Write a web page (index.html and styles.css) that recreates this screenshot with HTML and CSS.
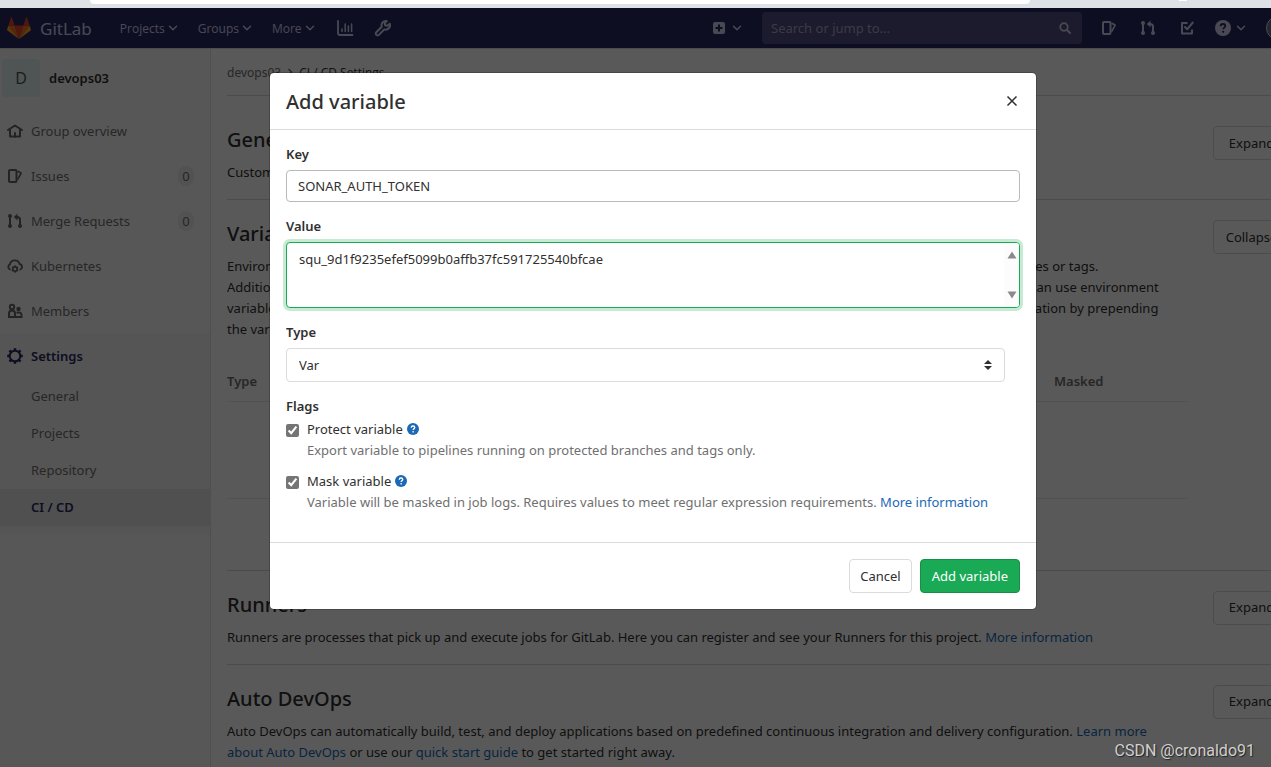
FILE: index.html
```html
<!DOCTYPE html>
<html lang="en">
<head>
<meta charset="utf-8">
<title>CI / CD Settings · devops03 · GitLab</title>
<link rel="stylesheet" href="styles.css">
</head>
<body>
<svg class="sprite" aria-hidden="true">
  <symbol id="i-caret" viewBox="0 0 12 12"><path d="M2.500 4.200 6 7.700l3.500-3.500" fill="none" stroke="currentColor" stroke-width="1.500" stroke-linecap="round" stroke-linejoin="round"/></symbol>
  <symbol id="i-issues" viewBox="0 0 16 16"><path d="M3 2h5.500a1 1 0 0 1 1 1v10a1 1 0 0 1-1 1H3a1 1 0 0 1-1-1V3a1 1 0 0 1 1-1z" fill="none" stroke="currentColor" stroke-width="2"/><path d="M10.500 3.300l3 1.300c.5.200.6.600.4 1l-3.400 6" fill="none" stroke="currentColor" stroke-width="1.700" stroke-linejoin="round"/></symbol>
  <symbol id="i-merge" viewBox="0 0 16 16"><path d="M3 3v10M13 13V6.500C13 4.700 12 4 10 4H9" fill="none" stroke="currentColor" stroke-width="2"/><circle cx="3" cy="3" r="2" fill="currentColor"/><circle cx="3" cy="13" r="2" fill="currentColor"/><circle cx="13" cy="13" r="2" fill="currentColor"/><path d="M10.500.5v7L6.800 4z" fill="currentColor"/></symbol>
  <symbol id="i-todo" viewBox="0 0 16 16"><path d="M8.500 3H3v10.500h10V9.500" fill="none" stroke="currentColor" stroke-width="2" stroke-linejoin="round"/><path d="M6 7l2.200 2.300L13.800 2.500" fill="none" stroke="currentColor" stroke-width="2" stroke-linecap="round" stroke-linejoin="round"/></symbol>
  <symbol id="i-help" viewBox="0 0 16 16"><circle cx="8" cy="8" r="8" fill="currentColor"/><path class="mark" d="M5.700 6.300C5.700 4.800 6.700 4 8 4s2.300.8 2.300 2c0 1.600-2.100 1.700-2.100 3.300" fill="none" stroke-width="1.800"/><circle class="mark-dot" cx="8.200" cy="11.800" r="1.100"/></symbol>
</svg>
<div class="viewport">
  <div class="browser"><div class="omnibox"></div><div class="tab-dot"></div></div>
  <div class="app">
    <header class="navbar">
      <a class="brand" href="#">
        <svg class="tanuki" viewBox="0 0 24 22"><path fill="#e24329" d="M12 22 7.600 8.400h8.800z"/><path fill="#fc6d26" d="M12 22 7.600 8.400H1.400zM12 22l4.400-13.600h6.200z"/><path fill="#fca326" d="M1.400 8.400.1 12.500c-.1.400 0 .8.300 1L12 22zM22.600 8.400l1.300 4.100c.1.400 0 .8-.3 1L12 22z"/><path fill="#e24329" d="M1.400 8.400h6.200L4.900.3c-.1-.4-.7-.4-.8 0zM22.600 8.400h-6.200L19.100.3c.1-.4.700-.4.800 0z"/></svg>
        <span>GitLab</span>
      </a>
      <nav class="menu">
        <button type="button">Projects <svg class="caret"><use href="#i-caret"/></svg></button>
        <button type="button">Groups <svg class="caret"><use href="#i-caret"/></svg></button>
        <button type="button">More <svg class="caret"><use href="#i-caret"/></svg></button>
      </nav>
      <div class="tools">
        <a href="#" aria-label="Analytics"><svg class="tool" viewBox="0 0 18 18"><path d="M2 2v12a2 2 0 0 0 2 2h12.500" fill="none" stroke="currentColor" stroke-width="1.800" stroke-linecap="round"/><path d="M6 12.500V10M9.200 12.500V5M12.400 12.500V7M15.600 12.500V5" fill="none" stroke="currentColor" stroke-width="1.500" stroke-linecap="round"/></svg></a>
        <a href="#" aria-label="Admin"><svg class="tool" viewBox="0 0 18 18"><path d="M15.800 4.800l-2.700 2-2-.5-.5-2L12.700 2A4.400 4.400 0 0 0 7.700 7.800L2.300 13.300a1.800 1.800 0 0 0 2.600 2.600l5.400-5.500a4.400 4.400 0 0 0 5.500-5.600z" fill="none" stroke="currentColor" stroke-width="2" stroke-linejoin="round"/></svg></a>
      </div>
      <div class="nav-right">
        <button class="drop" type="button" aria-label="New"><svg class="icon" viewBox="0 0 16 16"><path fill="currentColor" fill-rule="evenodd" d="M4 2h8a2 2 0 0 1 2 2v8a2 2 0 0 1-2 2H4a2 2 0 0 1-2-2V4a2 2 0 0 1 2-2zm3 2.500V7H4.500v2H7v2.500h2V9h2.500V7H9V4.500z"/></svg><svg class="caret"><use href="#i-caret"/></svg></button>
        <label class="search"><input type="text" placeholder="Search or jump to..." aria-label="Search or jump to"><svg class="lens" viewBox="0 0 12 12"><circle cx="5" cy="5" r="3.800" fill="none" stroke="currentColor" stroke-width="1.700"/><path d="M8 8l3 3" stroke="currentColor" stroke-width="2" stroke-linecap="round"/></svg></label>
        <div class="nav-icons">
          <a href="#" aria-label="Issues"><svg class="icon"><use href="#i-issues"/></svg></a>
          <a href="#" aria-label="Merge requests"><svg class="icon"><use href="#i-merge"/></svg></a>
          <a href="#" aria-label="To-Do List"><svg class="icon"><use href="#i-todo"/></svg></a>
        </div>
        <button class="drop" type="button" aria-label="Help"><svg class="icon nav-help"><use href="#i-help"/></svg><svg class="caret"><use href="#i-caret"/></svg></button>
        <span class="user"></span>
      </div>
    </header>
    <div class="body">
      <aside class="sidebar">
        <a class="context" href="#"><span class="avatar">D</span><strong>devops03</strong></a>
        <a class="item" href="#"><svg class="icon" viewBox="0 0 16 16"><path d="M1 7l7-4.500L15 7M3 6.500v7h3.500M13 6.500v7H9.500M8 10v4" fill="none" stroke="currentColor" stroke-width="2" stroke-linejoin="round" stroke-linecap="round"/></svg>Group overview</a>
        <a class="item" href="#"><svg class="icon"><use href="#i-issues"/></svg>Issues<span class="count">0</span></a>
        <a class="item" href="#"><svg class="icon"><use href="#i-merge"/></svg>Merge Requests<span class="count">0</span></a>
        <a class="item" href="#"><svg class="icon" viewBox="0 0 16 16"><path d="M3 11.500A2.800 2.800 0 0 1 2.900 6.400 5 5 0 0 1 12.600 6a2.900 2.900 0 0 1 .7 5.500" fill="none" stroke="currentColor" stroke-width="1.900" stroke-linecap="round"/><circle cx="8" cy="11" r="2.200" fill="none" stroke="currentColor" stroke-width="1.700"/><path d="M8 7.200v1.400M8 13.400v1.400M4.900 9.200l1.200.7M9.900 12.100l1.200.7M11.100 9.200l-1.200.7M6.100 12.100l-1.200.7" stroke="currentColor" stroke-width="1.500"/></svg>Kubernetes</a>
        <a class="item" href="#"><svg class="icon" viewBox="0 0 16 16"><circle cx="5" cy="4" r="2.200" fill="none" stroke="currentColor" stroke-width="2"/><path d="M2 14V10.500C2 8.500 3.200 7.500 5 7.500s3 1 3 3V14z" fill="none" stroke="currentColor" stroke-width="2"/><circle cx="11.500" cy="6" r="2.200" fill="currentColor"/><path d="M9.500 9.800c3-1 5 0 5 2V14H8" fill="none" stroke="currentColor" stroke-width="2"/></svg>Members</a>
        <div class="group">
          <a class="item current" href="#"><svg class="icon" viewBox="0 0 16 16"><circle cx="8" cy="8" r="5.300" fill="none" stroke="currentColor" stroke-width="2"/><path d="M8 .2v2.500M8 13.300v2.500M.2 8h2.500M13.300 8h2.500M2.500 2.500l1.700 1.700M11.800 11.800l1.700 1.700M13.500 2.500l-1.700 1.700M4.200 11.800l-1.700 1.700" stroke="currentColor" stroke-width="2.600"/></svg>Settings</a>
          <a class="sub" href="#">General</a>
          <a class="sub" href="#">Projects</a>
          <a class="sub" href="#">Repository</a>
          <a class="sub active" href="#">CI / CD</a>
        </div>
      </aside>
      <main class="content">
        <nav class="crumbs"><a href="#">devops03</a><svg class="crumb-arrow" viewBox="0 0 8 8"><path d="M2.500 1l3 3-3 3" fill="none" stroke="currentColor" stroke-width="1.500"/></svg><strong>CI / CD Settings</strong></nav>
        <section class="panel">
          <div class="panel-text"><h4>General pipelines</h4><p>Customize your pipeline configuration.</p></div>
          <button class="btn toggle" type="button">Expand</button>
        </section>
        <section class="panel variables">
          <div class="panel-text">
            <h4>Variables</h4>
            <p>Environment variables are applied to environments via the runner. They can be protected by only exposing them to protected branches or tags.<br>Additionally, they can be masked so they are hidden in job logs, though they must match certain regexp requirements to do so. You can use environment<br>variables for passwords, secret keys, or whatever you want. You may also add variables that are made available to the running application by prepending<br>the variable key with K8S_SECRET_.</p>
            <table>
              <thead><tr><th class="c-type">Type</th><th class="c-key">Key</th><th class="c-value">Value</th><th class="c-prot">Protected</th><th>Masked</th></tr></thead>
              <tbody><tr><td colspan="5"></td></tr></tbody>
            </table>
          </div>
          <button class="btn toggle" type="button">Collapse</button>
        </section>
        <section class="panel">
          <div class="panel-text"><h4>Runners</h4><p>Runners are processes that pick up and execute jobs for GitLab. Here you can register and see your Runners for this project. <a href="#">More information</a></p></div>
          <button class="btn toggle" type="button">Expand</button>
        </section>
        <section class="panel">
          <div class="panel-text"><h4>Auto DevOps</h4><p>Auto DevOps can automatically build, test, and deploy applications based on predefined continuous integration and delivery configuration. <a href="#">Learn more<br>about Auto DevOps</a> or use our <a href="#">quick start guide</a> to get started right away.</p></div>
          <button class="btn toggle" type="button">Expand</button>
        </section>
      </main>
    </div>
    <div class="backdrop">
      <form class="modal" role="dialog" aria-labelledby="modal-title">
        <header class="modal-head"><h2 id="modal-title">Add variable</h2><button class="close" type="button" aria-label="Close"><svg viewBox="0 0 12 12"><path d="M1.500 1.500l9 9M10.500 1.500l-9 9" stroke="currentColor" stroke-width="1.500"/></svg></button></header>
        <div class="modal-body">
          <div class="field"><label for="key">Key</label><input class="control" id="key" type="text" value="SONAR_AUTH_TOKEN"></div>
          <div class="field"><label for="value">Value</label>
            <div class="area"><textarea id="value" spellcheck="false">squ_9d1f9235efef5099b0affb37fc591725540bfcae</textarea>
              <div class="scroller"><svg viewBox="0 0 10 8"><path d="M5 .5 9.500 7.500h-9z" fill="#8a8a8a"/></svg><svg viewBox="0 0 10 8"><path d="M5 7.500 9.500.5h-9z" fill="#8a8a8a"/></svg></div></div>
          </div>
          <div class="field type"><label for="type">Type</label>
            <div class="pick"><select id="type"><option>Var</option><option>File</option></select><svg viewBox="0 0 8 10"><path d="M4 0l4 4H0zM4 10l4-4H0z" fill="#303030"/></svg></div></div>
          <fieldset>
            <legend>Flags</legend>
            <div class="flag"><input id="protect" type="checkbox" checked><div><label for="protect">Protect variable</label><a class="hint" href="#" aria-label="Help"><svg><use href="#i-help"/></svg></a><p>Export variable to pipelines running on protected branches and tags only.</p></div></div>
            <div class="flag"><input id="mask" type="checkbox" checked><div><label for="mask">Mask variable</label><a class="hint" href="#" aria-label="Help"><svg><use href="#i-help"/></svg></a><p>Variable will be masked in job logs. Requires values to meet regular expression requirements. <a href="#">More information</a></p></div></div>
          </fieldset>
        </div>
        <footer class="modal-foot"><button class="btn" type="button">Cancel</button><button class="btn success" type="submit">Add variable</button></footer>
      </form>
    </div>
  </div>
  <div class="watermark">CSDN @cronaldo91</div>
</div>
</body>
</html>
```
FILE: styles.css
```css
* { box-sizing: border-box; }
body { margin: 0; font: 13px/21px "Noto Sans", "Open Sans", sans-serif; color: #303030; }
button, input, select, textarea { font: inherit; color: inherit; }
button { cursor: pointer; }
a { color: #1b69b6; text-decoration: none; }
h2, h4, p { margin: 0; }
svg { display: block; flex: none; }
.sprite { position: absolute; width: 0; height: 0; }

.viewport { position: relative; height: 100vh; overflow: hidden; display: flex; flex-direction: column; }
.browser { position: relative; flex: none; height: 8px; background: #dee1e6; }
.omnibox { height: 4px; margin: 0 241px 0 90px; background: #fff; border-radius: 0 0 12px 12px; }
.tab-dot { position: absolute; top: 0; right: 84px; width: 8px; height: 1px; background: #fff; }
.app { position: relative; flex: 1; min-height: 0; margin-right: -35px; display: flex; flex-direction: column; overflow: hidden; background: #fff; }

/* Navigation bar */
.navbar { flex: none; height: 40px; display: flex; align-items: center; padding: 0 16px 0 7px; background: #292961; color: #d1d1f0; font-size: 12px; font-weight: 500; }
.navbar a { color: inherit; }
.navbar button { padding: 0; border: 0; background: none; }
.brand { display: flex; align-items: center; gap: 9px; font-size: 17px; font-weight: 400; }
.tanuki { width: 24px; height: 22px; }
.menu { display: flex; gap: 19px; margin-left: 28px; font-family: "Open Sans", sans-serif; }
.menu button, .drop { display: flex; align-items: center; gap: 2px; }
.caret { width: 12px; height: 12px; }
.icon { width: 16px; height: 16px; }
.tools { display: flex; gap: 20px; margin-left: 20px; }
.tool { width: 18px; height: 18px; }
.nav-right { display: flex; align-items: center; gap: 19px; margin-left: auto; }
.nav-icons { display: flex; gap: 23px; margin-right: 1px; }
.drop { gap: 4px; }
.search { width: 320px; height: 32px; display: flex; align-items: center; padding: 0 11px 0 9px; border-radius: 4px; background: #504f80; font-size: 13px; font-weight: 400; }
.search input { flex: 1; min-width: 0; padding: 0; border: 0; outline: 0; background: none; }
.search input::placeholder { color: #a7a7c8; opacity: 1; }
.lens { width: 12px; height: 12px; }
.mark { stroke: var(--mark, #fff); }
.mark-dot { fill: var(--mark, #fff); }
.nav-help { --mark: #292961; }
.user { width: 24px; height: 24px; border: 1px solid #d1d1f0; border-radius: 50%; background: #6e6e8f; }

/* Sidebar */
.body { flex: 1; min-height: 0; display: flex; border-top: 1px solid #dbdbdb; }
.sidebar { flex: none; width: 211px; border-right: 1px solid #e1e1e1; background: #fafafa; display: flex; flex-direction: column; }
.context { display: flex; align-items: center; gap: 9px; height: 38px; margin: 10px 0 11px 2px; color: #303030; }
.context strong { font-weight: 600; }
.avatar { width: 38px; height: 38px; display: grid; place-items: center; border-radius: 4px; background: #e0f2f1; color: #555; font-size: 16px; }
.item { display: flex; align-items: center; gap: 8px; height: 45px; padding: 1px 16px 0 7px; color: #707070; }
.item .icon { color: #666; }
.count { margin-left: auto; width: 16px; height: 20px; line-height: 20px; border-radius: 8px; text-align: center; background: #ebebeb; }
.group { padding-bottom: 8px; background: #f2f2f2; }
.item.current, .item.current .icon { color: #292961; font-weight: 600; }
.sub { display: block; padding: 8px 0 8px 31px; color: #707070; }
.sub.active { background: #e6e6e6; color: #292961; font-weight: 600; }

/* Settings page */
.content { flex: 1; min-width: 0; padding: 0 16px; }
.crumbs { height: 47px; display: flex; align-items: center; gap: 5px; margin-bottom: 10px; border-bottom: 1px solid #dbdbdb; font-size: 12px; }
.crumbs a { color: #707070; }
.crumbs strong { font-family: "Open Sans", sans-serif; font-weight: 500; }
.crumb-arrow { width: 8px; height: 8px; color: #707070; }
.panel { display: flex; justify-content: space-between; align-items: flex-start; padding: 20px 0 16px; border-bottom: 1px solid #dbdbdb; }
.panel-text { flex: none; width: 960px; }
.panel h4 { font-size: 20px; line-height: 28px; font-weight: 500; margin-bottom: 8px; }
.panel p { white-space: nowrap; }
.variables { padding-bottom: 71px; }
table { width: 100%; margin-top: 20px; border-collapse: collapse; table-layout: fixed; }
th, td { padding: 0; border-bottom: 1px solid #e8e8e8; text-align: left; color: #707070; }
th { height: 41px; padding-top: 3px; font-weight: 600; }
td { height: 97px; }
.c-type { width: 100px; }
.c-key { width: 280px; }
.c-value { width: 320px; }
.c-prot { width: 127px; }
.btn { height: 34px; padding: 0 10px; border: 1px solid #dbdbdb; border-radius: 4px; background: #fff; color: #303030; }
.btn.toggle { width: 77px; padding: 0; }

/* Dialog */
.backdrop { position: absolute; inset: 0; display: flex; justify-content: center; align-items: flex-start; padding-top: 64px; background: rgba(0, 0, 0, .65); }
.modal { width: 768px; border: 1px solid rgba(0, 0, 0, .2); border-radius: 5px; background: #fff; background-clip: padding-box; }
.modal-head { display: flex; justify-content: space-between; align-items: center; height: 57px; padding: 0 16px; border-bottom: 1px solid #dbdbdb; }
.modal-head h2 { padding-top: 2px; font-size: 20px; line-height: 24px; font-weight: 500; }
.close { padding: 2px; border: 0; background: none; }
.close svg { width: 12px; height: 12px; }
.modal-body { padding: 14px 16px 30px; }
.field { margin-bottom: 14px; }
.field label, legend { display: block; font-weight: 600; }
.field label { margin-bottom: 5px; }
.control { display: block; width: 100%; height: 32px; padding: 0 11px; border: 1px solid #bababa; border-radius: 4px; }
.area { position: relative; }
textarea { display: block; width: 100%; height: 66px; padding: 6px 12px; border: 1px solid #1aaa55; border-radius: 4px; outline: 0; resize: none; overflow: hidden; background: #fff; box-shadow: 0 0 0 3px #c6ead4; }
.scroller { position: absolute; top: 1px; right: 1px; bottom: 1px; width: 15px; display: flex; flex-direction: column; justify-content: space-between; align-items: center; padding: 8px 0; background: #fcfcfc; border-radius: 0 3px 3px 0; }
.scroller svg { width: 10px; height: 8px; }
.type { margin-right: 15px; }
.pick { position: relative; }
.pick svg { position: absolute; right: 13px; top: 12px; width: 8px; height: 10px; pointer-events: none; }
select { display: block; width: 100%; height: 34px; padding: 0 12px; border: 1px solid #dbdbdb; border-radius: 4px; appearance: none; background: #fff; }
fieldset { margin: 0; padding: 0; border: 0; }
legend { padding: 0; margin-bottom: 2px; }
.flag { display: flex; gap: 8px; margin-bottom: 11px; }
.flag:last-child { margin-bottom: 0; }
.flag > input { flex: none; width: 13px; height: 13px; margin: 5px 0 0; accent-color: #757575; }
.flag label { line-height: 20px; }
.flag p { line-height: 20px; color: #707070; }
.hint { display: inline-block; margin-left: 4px; vertical-align: -1px; }
.hint svg { width: 12px; height: 12px; }
.modal-foot { display: flex; justify-content: flex-end; gap: 8px; padding: 16px; border-top: 1px solid #dbdbdb; }
.success { padding: 0 11px; border-color: #168f48; background: #1aaa55; color: #fff; }

.watermark { position: absolute; right: 16px; bottom: 6px; font: 16px/21px Roboto, "Liberation Sans", sans-serif; color: #d0d0d0; text-shadow: 1px 1px 1px #222; }
```
